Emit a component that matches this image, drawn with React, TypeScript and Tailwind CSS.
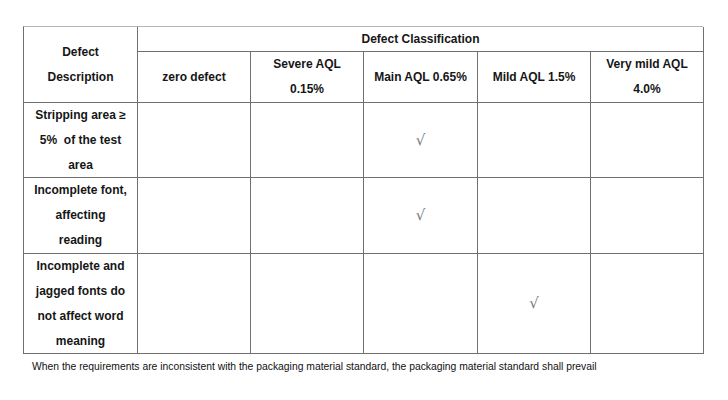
const levels = [
  { label: "zero defect", lines: ["zero defect"] },
  { label: "Severe AQL 0.15%", lines: ["Severe AQL", "0.15%"] },
  { label: "Main AQL 0.65%", lines: ["Main AQL 0.65%"] },
  { label: "Mild AQL 1.5%", lines: ["Mild AQL 1.5%"] },
  { label: "Very mild AQL 4.0%", lines: ["Very mild AQL", "4.0%"] },
];

const rows = [
  { lines: ["Stripping area ≥", "5%  of the test", "area"], mark: 2 },
  { lines: ["Incomplete font,", "affecting", "reading"], mark: 2 },
  { lines: ["Incomplete and", "jagged fonts do", "not affect word", "meaning"], mark: 3 },
];

function Lines({ lines }: { lines: string[] }) {
  return (
    <div className="flex flex-col items-center">
      {lines.map((l) => (
        <span key={l} className="leading-[25px] whitespace-pre">
          {l}
        </span>
      ))}
    </div>
  );
}

const cell = "border-r border-b border-[#707070] flex items-center justify-center text-center";

export default function App() {
  return (
    <div
      className="min-h-[400px] w-[728px] bg-white pt-[26px] pl-[23px] text-[#161616]"
      style={{ fontFamily: '"Liberation Sans", Arial, sans-serif' }}
    >
      <div className="grid grid-cols-[114px_113px_113px_114px_113px_113px] grid-rows-[25px_51px_75px_76px_100px] w-[680px] border-l border-t border-l-[#707070] border-t-[#b4b4b4] text-[12px] font-bold">
        <div className={`${cell} row-span-2`}>
          <Lines lines={["Defect", "Description"]} />
        </div>
        <div className={`${cell} col-span-5`}>Defect Classification</div>
        {levels.map((lv) => (
          <div key={lv.label} className={cell}>
            <Lines lines={lv.lines} />
          </div>
        ))}
        {rows.map((r, i) => (
          <div key={i} className="contents">
            <div className={cell}>
              <Lines lines={r.lines} />
            </div>
            {levels.map((lv, j) => (
              <div key={lv.label} className={cell}>
                {j === r.mark && (
                  <span
                    className="text-[15px] font-normal text-[#7a7a7a]"
                    style={{ fontFamily: '"DejaVu Serif", serif' }}
                  >
                    √
                  </span>
                )}
              </div>
            ))}
          </div>
        ))}
      </div>
      <p className="mt-[7px] pl-[9px] text-[10.35px] leading-[12px] text-[#111]">
        When the requirements are inconsistent with the packaging material standard, the packaging material standard shall prevail
      </p>
    </div>
  );
}
